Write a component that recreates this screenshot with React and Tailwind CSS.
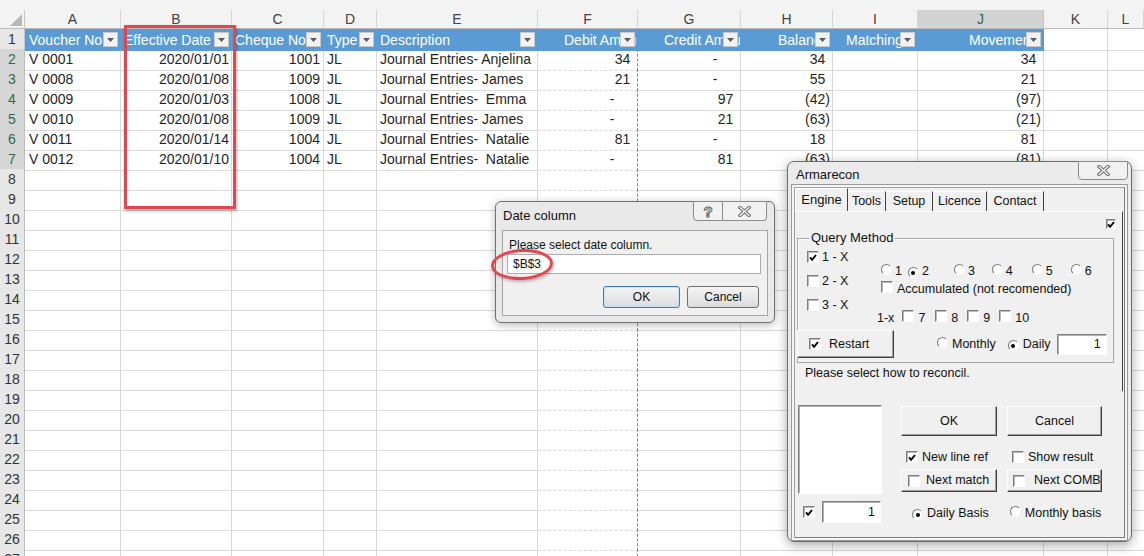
import React from "react";

const GRID =
  "grid grid-cols-[25px_96px_111px_92px_53px_161px_100px_103px_92px_85px_126px_64px_36px]";
const LETTERS = ["A", "B", "C", "D", "E", "F", "G", "H", "I", "J", "K", "L"];

const HEAD = [
  { t: "Voucher No", pad: "pl-[4px]" },
  { t: "Effective Date", pad: "pl-[3px]" },
  { t: "Cheque No", pad: "pl-[3px]" },
  { t: "Type", pad: "pl-[3px]" },
  { t: "Description", pad: "pl-[3px]" },
  { t: "Debit Amount", pad: "pl-[26px]" },
  { t: "Credit Amount", pad: "pl-[26px]" },
  { t: "Balance", pad: "pl-[37px]" },
  { t: "Matching", pad: "pl-[13px]" },
  { t: "Movement", pad: "pl-[51px]" },
];

const ROWS = [
  ["V 0001", "2020/01/01", "1001", "JL", "Journal Entries- Anjelina", "34", "-", "34", "", "34"],
  ["V 0008", "2020/01/08", "1009", "JL", "Journal Entries- James", "21", "-", "55", "", "21"],
  ["V 0009", "2020/01/03", "1008", "JL", "Journal Entries-  Emma", "-", "97", "(42)", "", "(97)"],
  ["V 0010", "2020/01/08", "1009", "JL", "Journal Entries- James", "-", "21", "(63)", "", "(21)"],
  ["V 0011", "2020/01/14", "1004", "JL", "Journal Entries-  Natalie", "81", "-", "18", "", "81"],
  ["V 0012", "2020/01/10", "1004", "JL", "Journal Entries-  Natalie", "-", "81", "(63)", "", "(81)"],
];

function Acc({ v }) {
  if (!v) return null;
  if (v === "-")
    return (
      <span>
        <span className="pr-[16px]">-</span>
        <span className="invisible">)</span>
      </span>
    );
  if (v.startsWith("(")) return <span>{v}</span>;
  return (
    <span>
      {v}
      <span className="invisible">)</span>
    </span>
  );
}

function Drop() {
  return (
    <span className="absolute right-[2px] top-[3px] flex h-[15px] w-[15px] items-center justify-center border border-[#c9c9c9] bg-[#f2f2f2]">
      <svg width="7" height="4" viewBox="0 0 7 4">
        <path d="M0 0h7L3.5 4z" fill="#5a5a5a" />
      </svg>
    </span>
  );
}

function Cb({ on, small }) {
  return (
    <span
      className={
        small
          ? "inline-flex h-[10px] w-[10px] shrink-0 items-center justify-center border border-t-[#7c7c7c] border-l-[#7c7c7c] border-b-white border-r-white bg-white shadow-[inset_1px_1px_0_#b9b9b9]"
          : "inline-flex h-[12px] w-[12px] shrink-0 items-center justify-center border border-t-[#7c7c7c] border-l-[#7c7c7c] border-b-white border-r-white bg-white shadow-[inset_1px_1px_0_#b9b9b9]"
      }
    >
      {on && (
        <svg width="8" height="7" viewBox="0 0 8 7">
          <path d="M1 3.4l2.1 2.4L7 1" fill="none" stroke="#000" strokeWidth="1.9" />
        </svg>
      )}
    </span>
  );
}

function Rd({ on }) {
  return (
    <span className="inline-flex h-[11px] w-[11px] shrink-0 items-center justify-center rounded-full border border-t-[#7a7a7a] border-l-[#7a7a7a] border-b-[#f6f6f6] border-r-[#f6f6f6] bg-white">
      {on && <span className="h-[4px] w-[4px] rounded-full bg-black" />}
    </span>
  );
}

const BTN =
  "flex items-center border border-t-white border-l-white border-b-[#404040] border-r-[#404040] bg-[#f0f0f0] shadow-[inset_-1px_-1px_0_#a0a0a0]";
const SUNK =
  "border border-t-[#808080] border-l-[#808080] border-b-white border-r-white bg-white shadow-[inset_1px_1px_0_#b0b0b0]";

function CloseGlyph() {
  return (
    <svg width="13" height="11" viewBox="0 0 13 11">
      <path d="M2 1.5l9 8M11 1.5l-9 8" stroke="#6a6a6a" strokeWidth="3.4" strokeLinecap="square" />
      <path d="M2 1.5l9 8M11 1.5l-9 8" stroke="#fafafa" strokeWidth="1.3" strokeLinecap="square" />
    </svg>
  );
}

function Sheet() {
  return (
    <div className="text-[14px] text-[#1f1f1f]">
      <div className="h-[10px] bg-[#f3f3f3]" />
      {/* column letters */}
      <div className={`${GRID} h-[19px] border-b border-[#bcbcbc] bg-[#f3f3f3] text-[#444]`}>
        <div className="flex items-end justify-end border-r border-[#c6c6c6] pb-[2px] pr-[2px]">
          <svg width="12" height="12" viewBox="0 0 12 12">
            <path d="M12 0v12H0z" fill="#b7b7b7" />
          </svg>
        </div>
        {LETTERS.map((l) => (
          <div
            key={l}
            className={
              l === "J"
                ? "flex items-center justify-center border-r border-[#c6c6c6] bg-[#d3d3d3] leading-none text-[#2f6b4a]"
                : "flex items-center justify-center border-r border-[#d6d6d6] leading-none"
            }
          >
            {l}
          </div>
        ))}
      </div>

      {/* table header row */}
      <div className={`${GRID} h-[20px]`}>
        <div className="flex items-center justify-center border-r border-b border-[#c6c6c6] bg-[#e7e7e7] text-[#333]">1</div>
        {HEAD.map((h, i) => (
          <div
            key={h.t}
            className={
              i === 5
                ? `relative flex items-center overflow-hidden whitespace-nowrap border-r border-dashed border-r-[#8a8a8a] bg-[#5b9bd5] text-white ${h.pad}`
                : `relative flex items-center overflow-hidden whitespace-nowrap border-r border-[#5b9bd5] bg-[#5b9bd5] text-white ${h.pad}`
            }
          >
            {h.t}
            <Drop />
          </div>
        ))}
        <div className="border-r border-b border-[#d9d9d9]" />
        <div className="border-b border-[#d9d9d9]" />
      </div>

      {/* data rows */}
      {Array.from({ length: 26 }, (_, k) => {
        const n = k + 2;
        const r = ROWS[k];
        const sel = n <= 7;
        return (
          <div key={n} className={`${GRID} h-[20px]`}>
            <div
              className={
                sel
                  ? "flex items-center justify-center border-r border-b border-r-[#bcbcbc] border-b-[#c9c9c9] bg-[#d6d6d6] text-[#2f6b4a]"
                  : "flex items-center justify-center border-r border-b border-r-[#bcbcbc] border-b-[#d6d6d6] bg-[#e7e7e7] text-[#333]"
              }
            >
              {n}
            </div>
            <div className="flex items-center border-r border-b border-[#d9d9d9] pl-[4px]">{r && r[0]}</div>
            <div className="flex items-center justify-end border-r border-b border-[#d9d9d9] pr-[2px]">{r && r[1]}</div>
            <div className="flex items-center justify-end border-r border-b border-[#d9d9d9] pr-[3px]">{r && r[2]}</div>
            <div className="flex items-center border-r border-b border-[#d9d9d9] pl-[3px]">{r && r[3]}</div>
            <div className="flex items-center whitespace-pre border-r border-b border-[#d9d9d9] pl-[3px]">{r && r[4]}</div>
            <div className="flex items-center justify-end border-b border-r border-b-[#d9d9d9] border-r-[#8a8a8a] border-dashed pr-[2px]">
              <Acc v={r && r[5]} />
            </div>
            <div className="flex items-center justify-end border-r border-b border-[#d9d9d9] pr-[2px]">
              <Acc v={r && r[6]} />
            </div>
            <div className="flex items-center justify-end border-r border-b border-[#d9d9d9] pr-[2px]">
              <Acc v={r && r[7]} />
            </div>
            <div className="border-r border-b border-[#d9d9d9]" />
            <div className="flex items-center justify-end border-r border-b border-[#d9d9d9] pr-[2px]">
              <Acc v={r && r[9]} />
            </div>
            <div className="border-r border-b border-[#d9d9d9]" />
            <div className="border-b border-[#d9d9d9]" />
          </div>
        );
      })}
    </div>
  );
}

function DateDialog() {
  return (
    <div className="absolute left-[495px] top-[201px] h-[122px] w-[280px] rounded-[6px] border border-[#707070] bg-[#e9e9e9] shadow-[0_2px_8px_rgba(0,0,0,0.28)]">
      <div className="flex h-[28px] items-center pl-[7px] text-[13px] text-[#111]">Date column</div>
      <div className="absolute right-[7px] top-[-1px] flex h-[20px]">
        <div className="flex w-[30px] items-center justify-center rounded-bl-[4px] border border-[#8c8c8c] bg-[#f1f1f1] text-[15px] font-bold leading-none text-transparent [-webkit-text-stroke:1px_#666]">
          ?
        </div>
        <div className="flex w-[44px] items-center justify-center rounded-br-[4px] border border-l-0 border-[#8c8c8c] bg-[#f1f1f1]">
          <CloseGlyph />
        </div>
      </div>
      <div className="mx-[6px] h-[86px] border border-[#a5a5a5] bg-[#f0f0f0] px-[4px] pt-[6px] text-[12px] text-[#111]">
        <div className="pl-[2px] leading-[16px]">Please select date column.</div>
        <div className="mt-[1px] flex h-[20px] w-[254px] items-center border border-[#abadb3] bg-white pl-[5px]">$B$3</div>
        <div className="mt-[12px] flex justify-end gap-[7px] pr-[4px]">
          <div className="flex h-[22px] w-[77px] items-center justify-center rounded-[3px] border border-[#3c7fb1] bg-[linear-gradient(#f4f4f4,#dcdcdc)] shadow-[inset_0_0_0_1px_#c8e2f8]">
            OK
          </div>
          <div className="flex h-[22px] w-[72px] items-center justify-center rounded-[3px] border border-[#707070] bg-[linear-gradient(#f4f4f4,#dcdcdc)]">
            Cancel
          </div>
        </div>
      </div>
    </div>
  );
}

function Armarecon() {
  return (
    <div className="absolute left-[787px] top-[161px] h-[381px] w-[345px] rounded-[7px] border border-[#6c6c6c] bg-[#ebebeb] text-[12.5px] text-[#111] shadow-[0_3px_12px_rgba(0,0,0,0.35)]">
      <div className="flex h-[25px] items-center pl-[8px] text-[13px]">Armarecon</div>
      <div className="absolute right-[3px] top-[-1px] flex h-[19px] w-[50px] items-center justify-center rounded-b-[4px] border border-[#8c8c8c] bg-[#f1f1f1]">
        <CloseGlyph />
      </div>

      <div className="mx-[6px] h-[351px] border border-t-[#a0a0a0] border-l-[#a0a0a0] border-b-[#7a7a7a] border-r-[#7a7a7a] bg-[#f0f0f0] shadow-[0_0_0_2px_#f5f5f5,0_0_0_3px_#9a9a9a]">
        {/* tabs */}
        <div className="flex h-[23px] items-end">
          <div className="flex h-[23px] w-[53px] items-center justify-center border-t border-l border-r border-t-white border-l-white border-r-[#404040] text-[13px]">
            Engine
          </div>
          {[
            ["Tools", "w-[38px]"],
            ["Setup", "w-[47px]"],
            ["Licence", "w-[54px]"],
            ["Contact", "w-[57px]"],
          ].map(([t, w]) => (
            <div key={t} className={`flex h-[20px] items-center justify-center border-t border-r border-t-white border-r-[#404040] ${w}`}>
              {t}
            </div>
          ))}
        </div>

        {/* tab page */}
        <div className="mr-[1px] h-[180px] border-t border-r border-t-white border-r-[#404040]">
          <div className="flex justify-end pr-[6px] pt-[7px]">
            <Cb on small />
          </div>

          <div className="relative ml-[2px] mt-[9px] h-[125px] w-[317px] border border-[#a8a8a8] shadow-[inset_1px_1px_0_#fff]">
            <span className="absolute left-[11px] top-[-9px] bg-[#f0f0f0] px-[2px] text-[13px] leading-[16px]">Query Method</span>

            <div className="flex pt-[6px]">
              <div className="ml-[9px] w-[70px]">
                {[
                  ["1 - X", true],
                  ["2 - X", false],
                  ["3 - X", false],
                ].map(([t, on]) => (
                  <div key={t} className="flex h-[24px] items-center gap-[3px]">
                    <Cb on={on} />
                    <span>{t}</span>
                  </div>
                ))}
              </div>
              <div className="flex-1">
                <div className="mt-[17px] flex h-[18px] items-center">
                  <span className="ml-[4px]"><Rd /></span>
                  <span className="ml-[3px]">1</span>
                  <span className="ml-[6px]"><Rd on /></span>
                  <span className="ml-[3px]">2</span>
                  <span className="ml-[25px]"><Rd /></span>
                  <span className="ml-[3px]">3</span>
                  <span className="ml-[17px]"><Rd /></span>
                  <span className="ml-[3px]">4</span>
                  <span className="ml-[19px]"><Rd /></span>
                  <span className="ml-[3px]">5</span>
                  <span className="ml-[18px]"><Rd /></span>
                  <span className="ml-[3px]">6</span>
                </div>
                <div className="flex h-[18px] items-center">
                  <span className="ml-[4px]"><Cb /></span>
                  <span className="ml-[4px]">Accumulated (not recomended)</span>
                </div>
                <div className="mt-[11px] flex h-[18px] items-center">
                  <span>1-x</span>
                  <span className="ml-[8px]"><Cb /></span>
                  <span className="ml-[4px]">7</span>
                  <span className="ml-[10px]"><Cb /></span>
                  <span className="ml-[4px]">8</span>
                  <span className="ml-[9px]"><Cb /></span>
                  <span className="ml-[4px]">9</span>
                  <span className="ml-[9px]"><Cb /></span>
                  <span className="ml-[4px]">10</span>
                </div>
              </div>
            </div>

            <div className="mt-[3px] flex h-[28px] items-center">
              <div className={`${BTN} -ml-[1px] h-[28px] w-[97px] pl-[11px]`}>
                <Cb on />
                <span className="ml-[8px]">Restart</span>
              </div>
              <span className="ml-[43px]"><Rd /></span>
              <span className="ml-[4px]">Monthly</span>
              <span className="ml-[12px]"><Rd on /></span>
              <span className="ml-[4px]">Daily</span>
              <div className={`${SUNK} ml-[6px] flex h-[21px] w-[50px] items-center justify-end pr-[5px]`}>1</div>
            </div>
          </div>

          <div className="ml-[10px] h-[20px] leading-[20px]">Please select how to reconcil.</div>
        </div>

        {/* bottom controls */}
        <div className="mt-[14px] flex">
          <div className="ml-[3px] w-[84px]">
            <div className={`${SUNK} h-[89px]`} />
            <div className="mt-[7px] flex h-[22px] items-center">
              <span className="ml-[5px]"><Cb on /></span>
              <div className={`${SUNK} ml-[7px] flex h-[22px] w-[59px] items-center justify-end pr-[5px]`}>1</div>
            </div>
          </div>
          <div className="ml-[19px]">
            <div className="mt-[1px] flex gap-[10px]">
              <div className={`${BTN} h-[30px] w-[96px] justify-center`}>OK</div>
              <div className={`${BTN} h-[30px] w-[95px] justify-center`}>Cancel</div>
            </div>
            <div className="mt-[11px] flex h-[20px] items-center">
              <div className="flex w-[106px] items-center pl-[5px]">
                <Cb on />
                <span className="ml-[4px]">New line ref</span>
              </div>
              <div className="flex items-center pl-[5px]">
                <Cb />
                <span className="ml-[4px]">Show result</span>
              </div>
            </div>
            <div className="mt-[2px] flex gap-[10px]">
              <div className={`${BTN} h-[23px] w-[96px] pl-[6px]`}>
                <Cb />
                <span className="ml-[6px]">Next match</span>
              </div>
              <div className={`${BTN} h-[23px] w-[95px] pl-[5px]`}>
                <Cb />
                <span className="ml-[9px]">Next COMB</span>
              </div>
            </div>
            <div className="mt-[10px] flex h-[22px] items-center">
              <span className="ml-[11px]"><Rd on /></span>
              <span className="ml-[4px]">Daily Basis</span>
              <span className="ml-[21px]"><Rd /></span>
              <span className="ml-[4px]">Monthly basis</span>
            </div>
          </div>
        </div>
      </div>
    </div>
  );
}

export default function App() {
  return (
    <div className="relative h-[556px] w-[1144px] overflow-hidden bg-white font-['Liberation_Sans',Arial,sans-serif]">
      <Sheet />

      {/* red highlight round the date column */}
      <div className="absolute left-[124px] top-[25px] h-[184px] w-[112px] border-[3px] border-[#e2474d] shadow-[1px_2px_3px_rgba(0,0,0,0.3)]" />

      <DateDialog />

      {/* red ring on the entered reference */}
      <div className="absolute left-[491px] top-[249px] h-[31px] w-[62px] -rotate-3 rounded-[50%] border-[3px] border-[#e2474d] shadow-[1px_2px_3px_rgba(0,0,0,0.25)]" />

      <Armarecon />
    </div>
  );
}
